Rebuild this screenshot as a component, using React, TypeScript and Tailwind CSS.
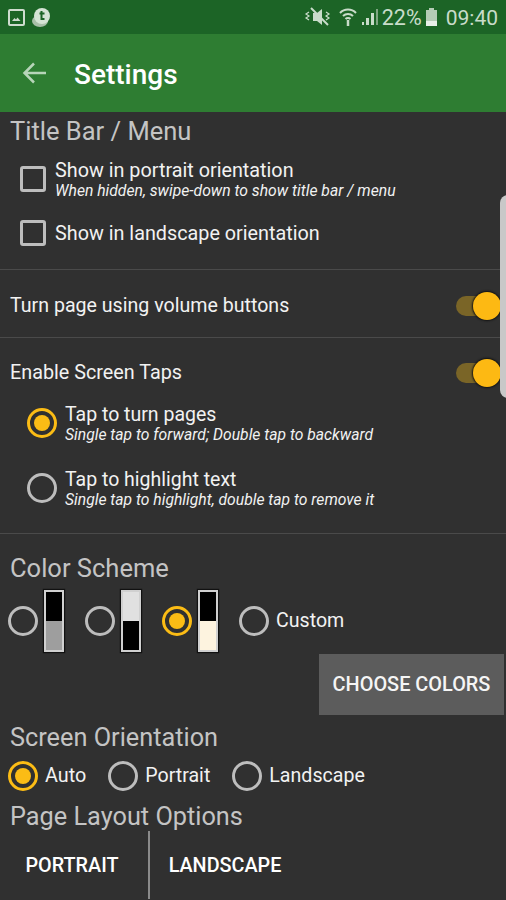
import React from "react";

const font = { fontFamily: "Roboto, 'Noto Sans', sans-serif" };

function Radio({ on }: { on?: boolean }) {
  return on ? (
    <span className="flex h-[30px] w-[30px] shrink-0 items-center justify-center rounded-full border-[3px] border-[#fbbc15]">
      <span className="block h-[16px] w-[16px] rounded-full bg-[#fbbc15]" />
    </span>
  ) : (
    <span className="block h-[30px] w-[30px] shrink-0 rounded-full border-[3px] border-[#bdbdbd]" />
  );
}

function Check() {
  return <span className="block h-[26px] w-[26px] shrink-0 rounded-[3px] border-[3px] border-[#bdbdbd]" />;
}

function Toggle() {
  return (
    <div className="relative h-[28px] w-[45px] shrink-0">
      <div className="absolute left-0 top-[4px] h-[20px] w-[36px] rounded-full bg-[#7a6527]" />
      <div className="absolute right-0 top-0 h-[28px] w-[28px] rounded-full bg-[#fdb913] shadow-[0_0_2px_1px_#111]" />
    </div>
  );
}

function Swatch({ top, bottom, topH }: { top: string; bottom: string; topH: number }) {
  return (
    <div className="flex h-[62px] w-[20px] shrink-0 flex-col border-2 border-[#d0d0d0] shadow-[0_0_1px_1px_#111]">
      <div style={{ height: topH, background: top }} />
      <div className="flex-1" style={{ background: bottom }} />
    </div>
  );
}

function Divider() {
  return <div className="h-px bg-[#4a4a4a]" />;
}

export default function App() {
  return (
    <div className="relative h-[900px] w-[506px] overflow-hidden bg-[#303030] text-[#f2f2f2]" style={font}>
      {/* status bar */}
      <div className="flex h-[34px] items-center justify-between bg-[#1c6426] pl-[8px] pr-[8px] text-[#c9dcca]">
        <div className="flex items-center gap-[6px]">
          <svg width="17" height="17" viewBox="0 0 17 17">
            <rect x="1" y="1" width="15" height="15" rx="1" fill="none" stroke="#cfdccf" strokeWidth="2" />
            <path d="M4 12l2.5-3 1.5 1.5 1.5-2 3 3.5z" fill="#cfdccf" />
          </svg>
          <svg width="21" height="21" viewBox="0 0 21 21">
            <ellipse cx="9" cy="14" rx="8" ry="6" fill="#a9bfa9" />
            <circle cx="11" cy="9" r="8" fill="#d5e4d5" />
            <path d="M10.5 4v8h3M8.5 6.5h5" stroke="#1c6426" strokeWidth="2" fill="none" />
          </svg>
        </div>
        <div className="flex items-center">
          <svg width="28" height="20" viewBox="0 0 28 20" className="mr-[7px]">
            <path d="M9 6h4l5-4v16l-5-4H9z" fill="#c9dcca" />
            <path d="M7 1l17 17" stroke="#c9dcca" strokeWidth="2" />
            <path d="M5 5L2 7l3 2-3 2 3 2M22 5l3 2-3 2 3 2-3 2" stroke="#c9dcca" strokeWidth="1.2" fill="none" />
          </svg>
          <svg width="18" height="20" viewBox="0 0 18 20" className="mr-[4px]">
            <path d="M1 6a11 11 0 0 1 16 0M4 9a7 7 0 0 1 10 0M6.500 12a3.500 3.500 0 0 1 5 0" stroke="#c9dcca" strokeWidth="2" fill="none" />
            <path d="M9 13v6" stroke="#c9dcca" strokeWidth="2.500" />
          </svg>
          <svg width="18" height="18" viewBox="0 0 18 18" className="mr-[3px]">
            <path d="M1 17h2v-3H1zM5 17h3V10H5zM10 17h3V5h-3z" fill="#c9dcca" />
            <path d="M15 17h2V1h-2z" fill="#7fa582" />
          </svg>
          <span className="pt-[2px] text-[21.500px] leading-none">22%</span>
          <svg width="13" height="18" viewBox="0 0 13 18" className="ml-[3px] mr-[8px]">
            <path d="M4 0h5v2h3v16H1V2h3z" fill="#b5cbb6" />
            <rect x="1" y="13" width="11" height="5" fill="#e8efe8" />
          </svg>
          <span className="pt-[2px] text-[21px] leading-none">09:40</span>
        </div>
      </div>
      {/* app bar */}
      <div className="flex h-[78px] items-center bg-[#2e7d32]">
        <svg width="26" height="24" viewBox="0 0 26 24" className="ml-[22px]">
          <path d="M24 12H3M12 2.500L2.500 12l9.500 9.500" stroke="#b7d5b9" strokeWidth="2.500" fill="none" />
        </svg>
        <span className="ml-[26px] pt-[3px] text-[28px] font-medium leading-none text-white">Settings</span>
      </div>

      {/* title bar */}
      <div className="pl-[10px]">
        <div className="mt-[4px] h-[30px] text-[25.500px] leading-[30px] text-[#c4c4c4]">Title Bar / Menu</div>
        <div className="mt-[11px] flex h-[44px] items-center pl-[10px]">
          <Check />
          <div className="ml-[9px]">
            <div className="text-[19.800px] leading-[23px]">Show in portrait orientation</div>
            <div className="text-[15.700px] italic leading-[18px]">When hidden, swipe-down to show title bar / menu</div>
          </div>
        </div>
        <div className="mt-[19px] flex h-[26px] items-center pl-[10px]">
          <Check />
          <div className="ml-[9px] text-[19.800px] leading-[23px]">Show in landscape orientation</div>
        </div>
      </div>
      <div className="mt-[23px]"><Divider /></div>
      <div className="flex h-[67px] items-center justify-between pl-[10px] pr-[5px] pt-[4px]">
        <span className="text-[19.600px]">Turn page using volume buttons</span>
        <Toggle />
      </div>
      <Divider />
      <div className="flex h-[67px] items-center justify-between pl-[10px] pr-[5px] pt-[3px]">
        <span className="text-[19.800px]">Enable Screen Taps</span>
        <Toggle />
      </div>
      <div className="-mt-[4px] flex h-[44px] items-center pl-[27px]">
        <Radio on />
        <div className="ml-[8px]">
          <div className="text-[19.500px] leading-[23px]">Tap to turn pages</div>
          <div className="text-[15.700px] italic leading-[18px]">Single tap to forward; Double tap to backward</div>
        </div>
      </div>
      <div className="mt-[21px] flex h-[44px] items-center pl-[27px]">
        <Radio />
        <div className="ml-[8px]">
          <div className="text-[19.500px] leading-[23px]">Tap to highlight text</div>
          <div className="text-[15.700px] italic leading-[18px]">Single tap to highlight, double tap to remove it</div>
        </div>
      </div>
      <div className="mt-[23px]"><Divider /></div>

      {/* color scheme */}
      <div className="mt-[19px] h-[30px] pl-[10px] text-[25.500px] leading-[30px] text-[#c4c4c4]">Color Scheme</div>
      <div className="mt-[7px] flex items-center pl-[8px]">
        <Radio />
        <div className="ml-[6px]"><Swatch top="#000" bottom="#9e9e9e" topH={29} /></div>
        <div className="ml-[21px]"><Radio /></div>
        <div className="ml-[6px]"><Swatch top="#e0e0e0" bottom="#000" topH={29} /></div>
        <div className="ml-[21px]"><Radio on /></div>
        <div className="ml-[6px]"><Swatch top="#000" bottom="#fdf3df" topH={29} /></div>
        <div className="ml-[21px]"><Radio /></div>
        <span className="ml-[7px] text-[19.600px]">Custom</span>
      </div>
      <div className="mt-[2px] flex justify-end pr-[2px]">
        <div className="flex h-[61px] w-[185px] items-center justify-center bg-[#5c5c5c] pt-[1px] text-[19.900px] font-medium text-[#f5f5f5]">CHOOSE COLORS</div>
      </div>

      {/* orientation */}
      <div className="mt-[8px] h-[30px] pl-[10px] text-[25.300px] leading-[30px] text-[#c4c4c4]">Screen Orientation</div>
      <div className="mt-[8px] flex items-center pl-[8px]">
        <Radio on />
        <span className="ml-[7px] text-[19.800px]">Auto</span>
        <div className="ml-[22px]"><Radio /></div>
        <span className="ml-[7px] text-[19.600px]">Portrait</span>
        <div className="ml-[22px]"><Radio /></div>
        <span className="ml-[7px] text-[19.600px]">Landscape</span>
      </div>
      <div className="mt-[11px] h-[30px] pl-[10px] text-[25.300px] leading-[30px] text-[#c4c4c4]">Page Layout Options</div>
      <div className="-mt-[1px] flex h-[68px] items-center">
        <div className="flex w-[148px] items-center justify-center pr-[4px] pt-[1px] text-[19.800px] font-medium text-white">PORTRAIT</div>
        <div className="h-[68px] w-[2px] bg-[#8a8a8a]" />
        <div className="flex w-[150px] items-center justify-center pt-[1px] text-[19.800px] font-medium text-white">LANDSCAPE</div>
      </div>

      {/* edge panel handle */}
      <div className="absolute left-[500px] top-[195px] h-[203px] w-[10px] rounded-l-[8px] bg-[#c8c8c8]" />
    </div>
  );
}
